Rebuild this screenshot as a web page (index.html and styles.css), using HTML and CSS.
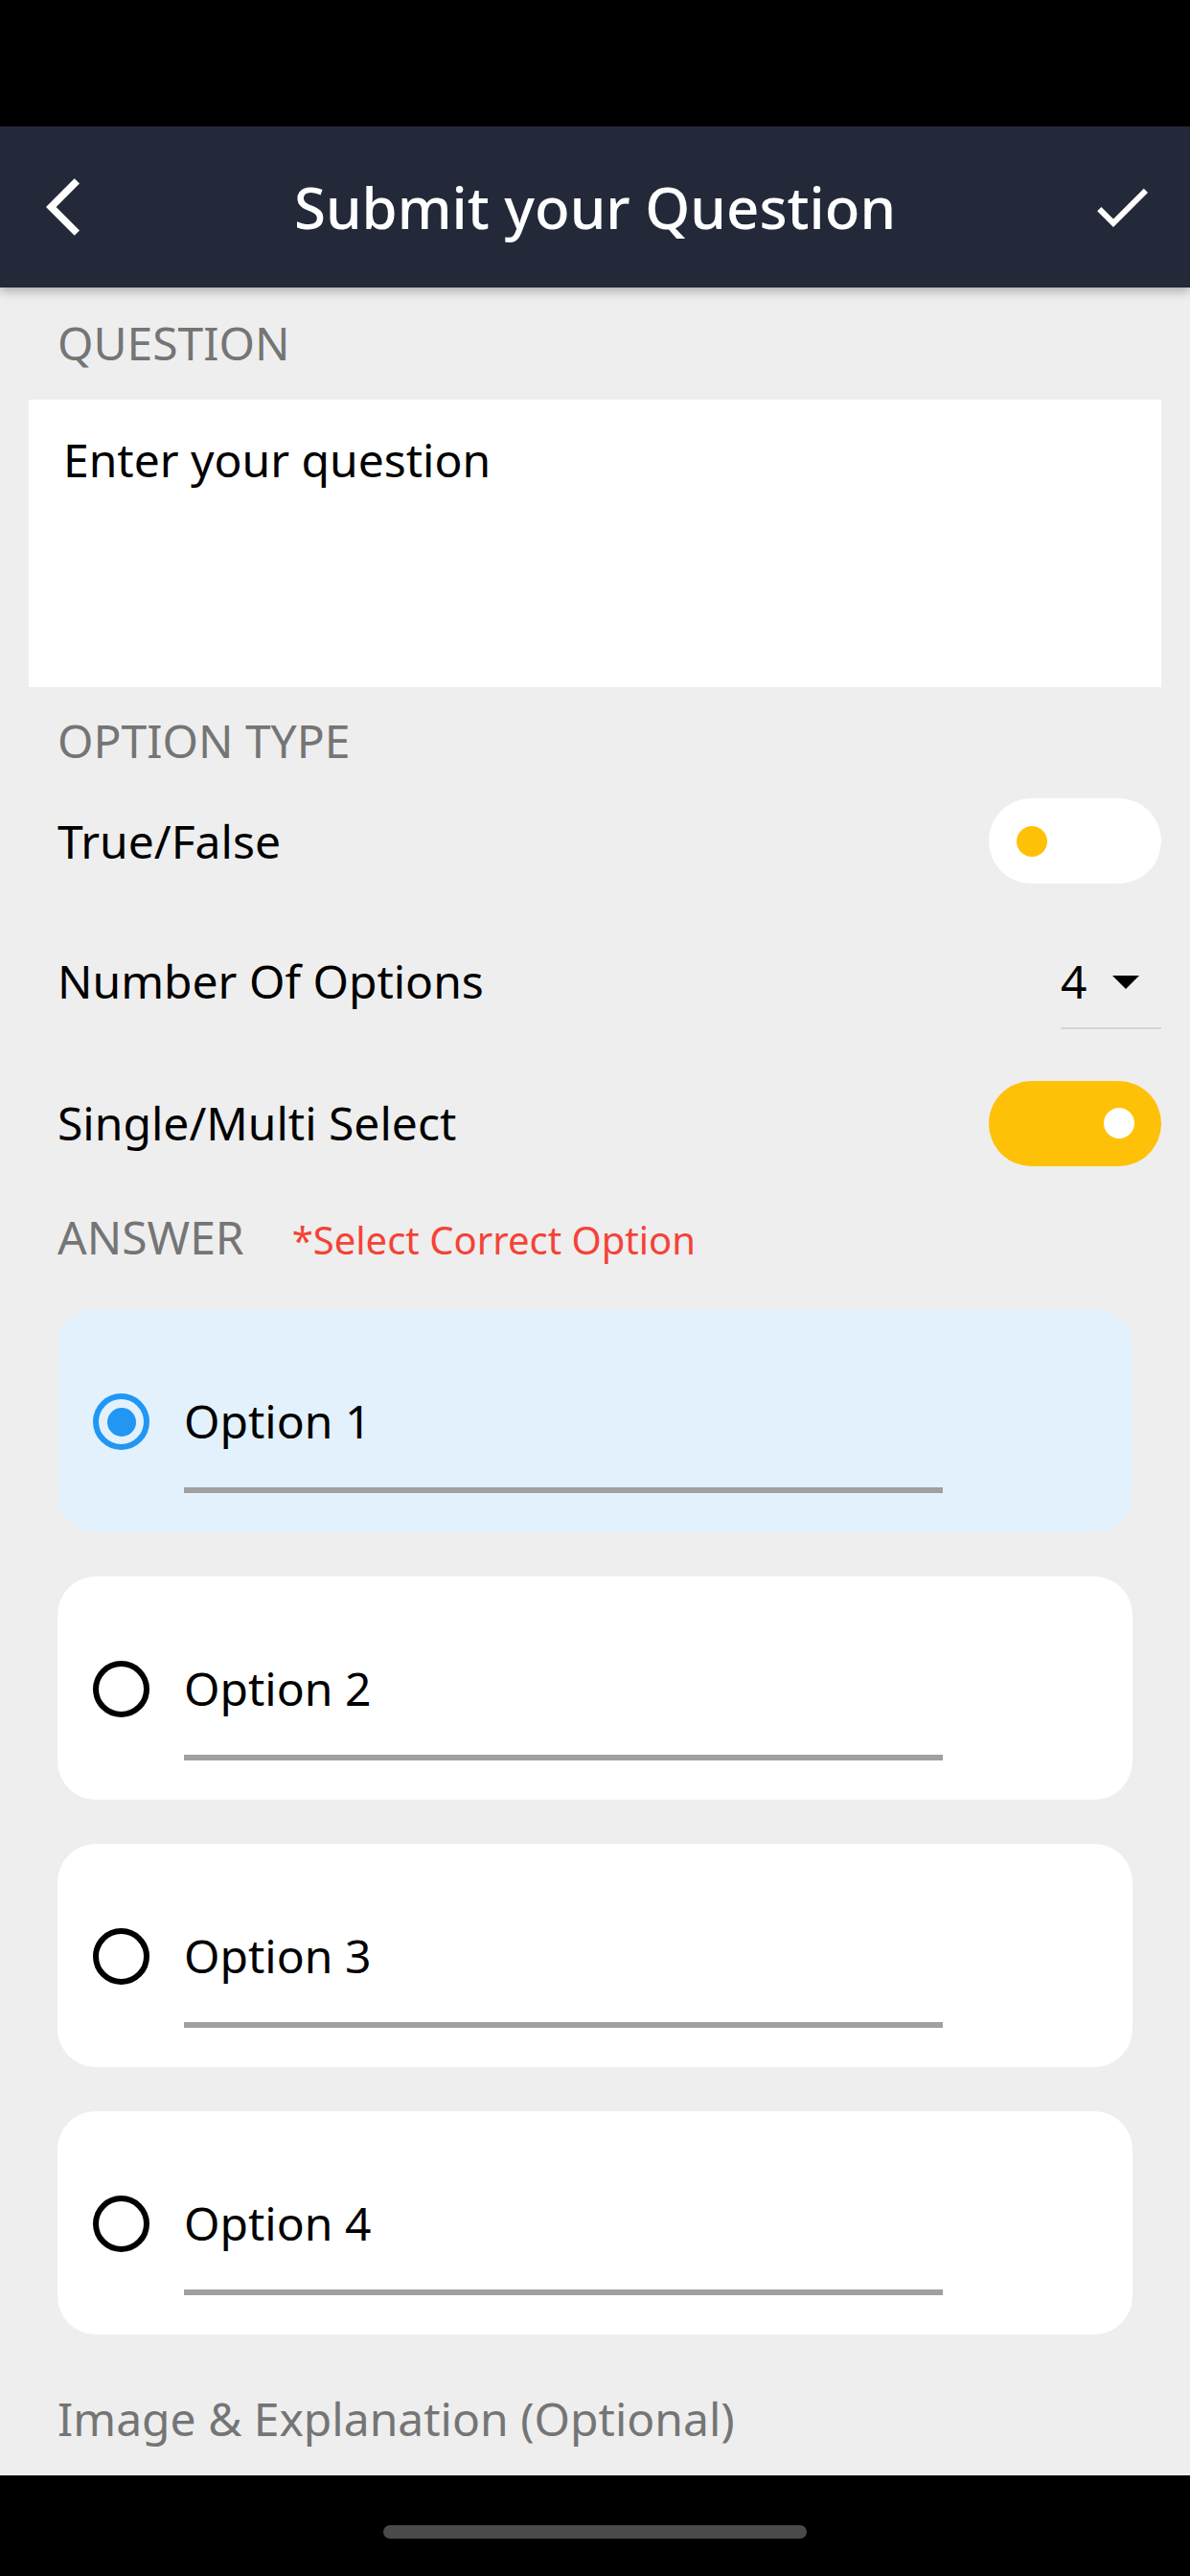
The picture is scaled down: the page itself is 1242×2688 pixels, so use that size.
FILE: index.html
```html
<!DOCTYPE html>
<html lang="en">
<head>
<meta charset="utf-8">
<title>Submit your Question</title>
<link rel="stylesheet" href="styles.css">
</head>
<body>
<div class="screen">
  <div class="status-bar"></div>
  <header class="app-bar">
    <button class="icon-btn back" aria-label="Back">
      <svg width="36" height="72" viewBox="0 0 12 24"><path d="M11.67 3.87L9.9 2.1 0 12l9.9 9.9 1.77-1.77L3.54 12z" fill="#fff"/></svg>
    </button>
    <h1 class="title">Submit your Question</h1>
    <button class="icon-btn done" aria-label="Submit">
      <svg width="72" height="72" viewBox="0 0 24 24"><path d="M9 16.2L4.8 12l-1.4 1.4L9 19 21 7l-1.4-1.4L9 16.2z" fill="#fff"/></svg>
    </button>
  </header>
  <main class="content">
    <div class="section-label label-question">QUESTION</div>
    <div class="question-box">Enter your question</div>

    <div class="section-label label-type">OPTION TYPE</div>
    <div class="row row-tf">
      <span class="row-text">True/False</span>
      <span class="switch switch-off"><span class="knob"></span></span>
    </div>
    <div class="row row-num">
      <span class="row-text">Number Of Options</span>
      <span class="dropdown"><span class="dd-value">4</span><span class="dd-arrow"></span></span>
    </div>
    <div class="row row-multi">
      <span class="row-text">Single/Multi Select</span>
      <span class="switch switch-on"><span class="knob"></span></span>
    </div>

    <div class="answer-row">
      <span class="section-label-inline">ANSWER</span>
      <span class="hint">*Select Correct Option</span>
    </div>

    <div class="options">
      <div class="option-card selected">
        <span class="radio radio-on"><span class="radio-dot"></span></span>
        <span class="option-field">Option 1</span>
      </div>
      <div class="option-card">
        <span class="radio"></span>
        <span class="option-field">Option 2</span>
      </div>
      <div class="option-card">
        <span class="radio"></span>
        <span class="option-field">Option 3</span>
      </div>
      <div class="option-card">
        <span class="radio"></span>
        <span class="option-field">Option 4</span>
      </div>
    </div>

    <div class="section-label-plain">Image &amp; Explanation (Optional)</div>
  </main>
  <div class="nav-bar"><span class="home-indicator"></span></div>
</div>
</body>
</html>
```

FILE: styles.css
```css
* { box-sizing: border-box; }

html, body {
  margin: 0;
  padding: 0;
  background: #eeeeee;
  font-family: "Noto Sans", Roboto, "Liberation Sans", sans-serif;
}

.screen {
  width: 1242px;
  height: 2688px;
  display: flex;
  flex-direction: column;
  overflow: hidden;
}

.status-bar {
  height: 132px;
  background: #000;
  flex: none;
}

.app-bar {
  height: 168px;
  flex: none;
  background: #232939;
  display: grid;
  grid-template-columns: 1fr auto 1fr;
  align-items: center;
  position: relative;
  z-index: 2;
  box-shadow: 0 4px 10px rgba(0, 0, 0, 0.28);
}

.icon-btn {
  border: 0;
  background: none;
  padding: 0;
  display: flex;
  align-items: center;
}

.back { justify-self: start; margin-left: 48px; }
.done { justify-self: end; margin-right: 35px; }

.title {
  margin: 0;
  color: #fff;
  font-size: 60px;
  font-weight: 500;
  line-height: 72px;
  white-space: nowrap;
}

.content {
  flex: 1;
  overflow: hidden;
  padding: 0 30px;
}

.section-label,
.section-label-inline,
.section-label-plain {
  font-size: 48px;
  line-height: 56px;
  color: #757575;
}

.section-label { padding-left: 30px; }
.label-question { margin-top: 30px; }
.label-type { margin-top: 28px; }

.question-box {
  margin-top: 31px;
  height: 300px;
  background: #fff;
  padding: 35px 36px;
  font-size: 48px;
  line-height: 56px;
  color: #000;
}

.row {
  display: flex;
  justify-content: space-between;
  padding-left: 30px;
}

.row-text {
  font-size: 48px;
  line-height: 56px;
  color: #000;
}

.row-tf { margin-top: 32px; height: 89px; align-items: center; }
.row-num { margin-top: 74px; align-items: flex-start; }
.row-multi { margin-top: 53px; height: 90px; align-items: center; }

.switch {
  width: 180px;
  height: 89px;
  border-radius: 45px;
  display: flex;
  align-items: center;
}
.switch-off { background: #fff; padding-left: 29px; }
.switch-on { background: #ffc107; justify-content: flex-end; padding-right: 28px; }
.knob {
  width: 32px;
  height: 32px;
  border-radius: 50%;
}
.switch-off .knob { background: #ffc107; }
.switch-on .knob { background: #fff; }

.dropdown {
  width: 105px;
  display: flex;
  align-items: center;
  padding-bottom: 20px;
  border-bottom: 2px solid #d6d6d6;
}
.dd-value {
  font-size: 48px;
  line-height: 56px;
  color: #000;
}
.dd-arrow {
  margin-left: 27px;
  width: 0;
  height: 0;
  border-left: 14px solid transparent;
  border-right: 14px solid transparent;
  border-top: 14px solid #000;
  margin-top: 2px;
}

.answer-row {
  margin-top: 46px;
  padding-left: 30px;
  display: flex;
  align-items: baseline;
  gap: 50px;
}
.hint {
  font-size: 40px;
  line-height: 56px;
  color: #f44336;
}

.options {
  margin-top: 44px;
  padding: 0 30px;
  display: flex;
  flex-direction: column;
  gap: 46px;
}

.option-card {
  background: #fff;
  border-radius: 40px;
  height: 233px;
  display: flex;
  align-items: flex-start;
  padding: 89px 0 0 37px;
}
.option-card.selected { background: #e3f1fc; }

.radio {
  width: 59px;
  height: 59px;
  border-radius: 50%;
  border: 6px solid #000;
  margin-top: -1px;
  margin-right: 36px;
  display: flex;
  align-items: center;
  justify-content: center;
  flex: none;
}
.radio-on { border-color: #2196f3; }
.radio-dot {
  width: 30px;
  height: 30px;
  border-radius: 50%;
  background: #2196f3;
}

.option-field {
  width: 792px;
  font-size: 48px;
  line-height: 56px;
  color: #000;
  padding-bottom: 41px;
  border-bottom: 6px solid #a0a0a0;
}

.section-label-plain {
  margin-top: 60px;
  padding-left: 30px;
}

.nav-bar {
  height: 105px;
  flex: none;
  background: #000;
  display: flex;
  justify-content: center;
  padding-top: 52px;
}
.home-indicator {
  width: 442px;
  height: 14px;
  border-radius: 7px;
  background: #4a4a4a;
}
```
